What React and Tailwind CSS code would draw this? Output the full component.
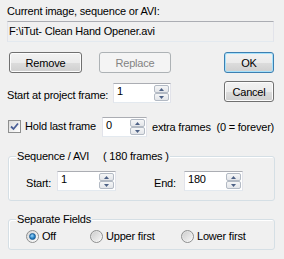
import React from 'react'

const font = { fontFamily: '"Liberation Sans", Arial, sans-serif' }

const Button = ({ children, w, isDefault, disabled }) => {
  let skin = 'border-[#707070] bg-[linear-gradient(#f2f2f2_0%,#ebebeb_50%,#dddddd_50%,#cfcfcf_100%)] shadow-[inset_0_0_0_1px_#fcfcfc] text-black'
  if (isDefault) skin = 'border-[#3c7fb1] bg-[linear-gradient(#f2f2f2_0%,#ebebeb_50%,#dddddd_50%,#cfcfcf_100%)] shadow-[inset_0_0_0_1px_#a6e1fb] text-black'
  if (disabled) skin = 'border-[#adb2b5] bg-[#f4f4f4] text-[#838383]'
  return (
    <div className={`flex h-[21px] items-center justify-center rounded-[3px] border pt-px ${skin} ${w}`}>
      {children}
    </div>
  )
}

const Arrow = ({ up }) => (
  <svg width="5" height="3" viewBox="0 0 5 3">
    <polygon points={up ? '0,3 5,3 2.5,0' : '0,0 5,0 2.5,3'} fill="#4d6185" />
  </svg>
)

const Spin = ({ value, w }) => (
  <div className={`flex h-[20px] border border-[#abadb3] border-x-[#e2e3ea] border-b-[#e3e9ef] bg-white ${w}`}>
    <div className="flex-1 pl-[3px] pt-px">{value}</div>
    <div className="flex w-[16px] flex-col py-px pr-px">
      <div className="flex flex-1 items-center justify-center rounded-[2px] border border-[#b3bac4] bg-[linear-gradient(#f5f6f7,#e3e5e9)]">
        <Arrow up />
      </div>
      <div className="flex flex-1 items-center justify-center rounded-[2px] border border-[#b3bac4] bg-[linear-gradient(#f5f6f7,#e3e5e9)]">
        <Arrow />
      </div>
    </div>
  </div>
)

const Radio = ({ checked }) => (
  <div className="flex h-[13px] w-[13px] shrink-0 items-center justify-center rounded-full border border-[#8e8f8f] bg-[linear-gradient(135deg,#d6d6d6,#ffffff)]">
    {checked ? (
      <div className="h-[7px] w-[7px] rounded-full border border-[#1a5e97] bg-[radial-gradient(circle_at_40%_35%,#9fd8fb,#2a85c8_55%,#0d4f8a)]" />
    ) : (
      <div className="h-[9px] w-[9px] rounded-full bg-[linear-gradient(135deg,#cfcfcf,#f4f4f4)]" />
    )}
  </div>
)

const Group = ({ title, h, children }) => (
  <div className={`relative ml-[8px] w-[267px] rounded-[3px] border border-[#d5dfe5] shadow-[inset_1px_1px_0_#ffffff] ${h}`}>
    <div className="absolute -top-[7px] left-[7px] flex bg-[#f0f0f0] px-px">{title}</div>
    {children}
  </div>
)

export default function App() {
  return (
    <div
      className="flex h-[259px] w-[284px] flex-col overflow-hidden bg-[#f0f0f0] text-[11px] leading-[13px] tracking-[-0.2px] text-black"
      style={font}
    >
      <div className="ml-[7px] mt-[5px]">Current image, sequence or AVI:</div>
      <div className="ml-[7px] mt-[3px] flex h-[21px] w-[267px] items-center border border-[#abadb3] border-x-[#e2e3ea] border-b-[#e3e9ef] bg-[#f0f0f0] pl-px">
        F:\iTut- Clean Hand Opener.avi
      </div>

      <div className="mt-[10px] flex items-start">
        <div className="ml-[9px]"><Button w="w-[73px]">Remove</Button></div>
        <div className="ml-[17px]"><Button w="w-[72px]" disabled>Replace</Button></div>
        <div className="ml-[53px]"><Button w="w-[50px]" isDefault>OK</Button></div>
      </div>

      <div className="mt-[8px] flex items-start">
        <div className="ml-[7px] mt-[8px] w-[106px]">Start at project frame:</div>
        <div className="mt-[2px]"><Spin value="1" w="w-[58px]" /></div>
        <div className="ml-[53px]"><Button w="w-[50px]">Cancel</Button></div>
      </div>

      <div className="mt-[14px] flex items-start">
        <div className="ml-[8px] mt-[3px] flex h-[13px] w-[13px] items-center justify-center border border-[#8e8f8f] bg-[linear-gradient(135deg,#dcdcdc,#ffffff)]">
          <svg width="11" height="11" viewBox="0 0 11 11">
            <path d="M2 5.5 L4.5 8 L9 2.5" fill="none" stroke="#4a5f97" strokeWidth="1.8" />
          </svg>
        </div>
        <div className="ml-[4px] mt-[3px] w-[77px]">Hold last frame</div>
        <Spin value="0" w="w-[45px]" />
        <div className="ml-[5px] mt-[4px] whitespace-pre">extra frames  (0 = forever)</div>
      </div>

      <div className="mt-[19px]">
        <Group
          h="h-[45px]"
          title={
            <>
              <span className="w-[86px] whitespace-pre">Sequence / AVI</span>
              <span className="whitespace-pre">( 180 frames )</span>
            </>
          }
        >
          <div className="flex items-start pl-[17px] pt-[14px]">
            <div className="mt-[6px] w-[31px]">Start:</div>
            <Spin value="1" w="w-[59px]" />
            <div className="ml-[38px] mt-[6px] w-[30px]">End:</div>
            <Spin value="180" w="w-[59px]" />
          </div>
        </Group>
      </div>

      <div className="mt-[18px]">
        <Group h="h-[31px]" title="Separate Fields">
          <div className="flex items-start pl-[17px] pt-[10px]">
            <div className="flex w-[64px] items-center">
              <Radio checked />
              <span className="ml-[3px]">Off</span>
            </div>
            <div className="flex w-[91px] items-center">
              <Radio />
              <span className="ml-[3px]">Upper first</span>
            </div>
            <div className="flex items-center">
              <Radio />
              <span className="ml-[3px]">Lower first</span>
            </div>
          </div>
        </Group>
      </div>
    </div>
  )
}
